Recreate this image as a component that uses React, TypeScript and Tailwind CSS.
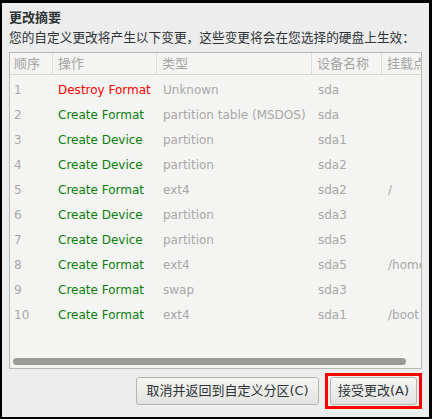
const rows = [
  ["1", "Destroy Format", "Unknown", "sda", ""],
  ["2", "Create Format", "partition table (MSDOS)", "sda", ""],
  ["3", "Create Device", "partition", "sda1", ""],
  ["4", "Create Device", "partition", "sda2", ""],
  ["5", "Create Format", "ext4", "sda2", "/"],
  ["6", "Create Device", "partition", "sda3", ""],
  ["7", "Create Device", "partition", "sda5", ""],
  ["8", "Create Format", "ext4", "sda5", "/home"],
  ["9", "Create Format", "swap", "sda3", ""],
  ["10", "Create Format", "ext4", "sda1", "/boot"],
];

export default function App() {
  return (
    <div
      className="h-[419px] w-[432px] overflow-hidden border-t-[3px] border-r-[3px] border-b-2 border-l-2 border-black bg-[#ededed] text-[13px]"
      style={{ fontFamily: '"DejaVu Sans", "Noto Sans CJK SC", sans-serif' }}
    >
      <div className="flex h-full flex-col px-[7px]">
        {/* 标题 */}
        <h1 className="mt-[5px] h-[19px] text-[13px] leading-[19px] font-bold text-[#2e3436]">更改摘要</h1>
        <p className="mt-[1px] h-[20px] text-[12.7px] leading-[20px] whitespace-nowrap text-[#2e3436]">
          您的自定义更改将产生以下变更，这些变更将会在您选择的硬盘上生效：
        </p>

        {/* 表格 */}
        <div className="mt-[4px] flex h-[317px] flex-col overflow-hidden border border-[#b6b6b3] bg-[#f4f4f2]">
          <div className="flex h-[22px] shrink-0 border-b border-[#d6d6d3] leading-[22px] text-[#a4a4a4]">
            <div className="w-[43px] shrink-0 border-r border-[#dcdcd9] pl-[4px]">顺序</div>
            <div className="w-[104px] shrink-0 border-r border-[#dcdcd9] pl-[5px]">操作</div>
            <div className="w-[155px] shrink-0 border-r border-[#dcdcd9] pl-[5px]">类型</div>
            <div className="w-[70px] shrink-0 border-r border-[#dcdcd9] pl-[5px] whitespace-nowrap">设备名称</div>
            <div className="shrink-0 pl-[5px] whitespace-nowrap">挂载点</div>
          </div>
          <div className="mt-[2px] flex flex-1 flex-col text-[12px]">
            {rows.map((r) => (
              <div key={r[0]} className="flex h-[25px] shrink-0 items-center whitespace-nowrap">
                <div className="w-[43px] shrink-0 pl-[4px] text-[#a8a8a8]">{r[0]}</div>
                <div
                  className={
                    r[1] === "Destroy Format"
                      ? "w-[104px] shrink-0 pl-[5px] text-[#ff0000]"
                      : "w-[104px] shrink-0 pl-[5px] text-[#0a7f0a]"
                  }
                >
                  {r[1]}
                </div>
                <div className="w-[155px] shrink-0 pl-[6px] text-[#a8a8a8]">{r[2]}</div>
                <div className="w-[70px] shrink-0 pl-[6px] text-[#a8a8a8]">{r[3]}</div>
                <div className="shrink-0 pl-[6px] text-[#a8a8a8]">{r[4]}</div>
              </div>
            ))}
          </div>
          {/* 横向滚动条 */}
          <div className="mb-[3px] flex h-[7px] shrink-0 px-[3px]">
            <div className="h-full w-[393px] rounded-full bg-[#9a9a98]" />
          </div>
        </div>

        {/* 按钮 */}
        <div className="mt-[4px] flex justify-end gap-[6px] pr-0">
          <button className="mt-[4px] h-[28px] w-[183px] rounded-[3px] border border-[#b4b4b0] bg-gradient-to-b from-[#f6f6f5] to-[#e2e2e0] text-[#2e3436]">
            取消并返回到自定义分区(C)
          </button>
          <div className="border-[3px] border-[#ff0000] p-[1px] px-[2px]">
            <button className="h-[28px] w-[87px] rounded-[3px] border border-[#b4b4b0] bg-gradient-to-b from-[#f6f6f5] to-[#e2e2e0] text-[#2e3436]">
              接受更改(A)
            </button>
          </div>
        </div>
      </div>
    </div>
  );
}
